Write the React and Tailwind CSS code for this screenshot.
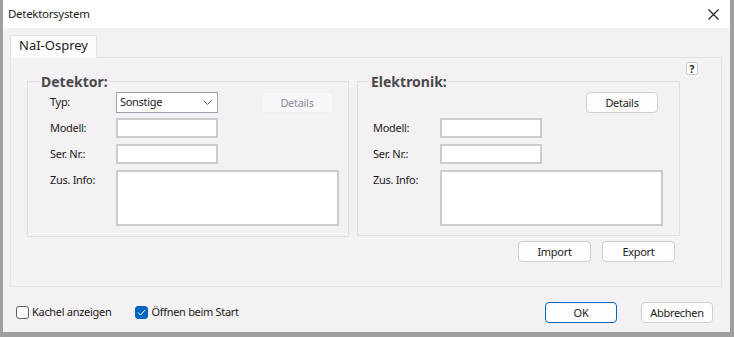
import React from 'react';
import { useState } from 'react';

const font = "font-['Segoe_UI','Noto_Sans','Open_Sans',sans-serif]";
const txt = 'text-[11px] tracking-[-0.3px] text-[#1b1b1b]';

function Btn({ children, disabled, primary, className = '' }) {
  return (
    <button
      type="button"
      className={
        'h-[21px] w-[72px] rounded-[4px] border text-[11px] tracking-[-0.3px] leading-none ' +
        (disabled
          ? 'border-[#f0ecf0] bg-[#faf7fa] text-[#8d8d9c] '
          : primary
            ? 'border-[#0067c0] bg-[#fdfdfd] text-[#1b1b1b] '
            : 'border-[#d0d0d0] bg-[#fdfdfd] text-[#1b1b1b] ') +
        className
      }
    >
      {children}
    </button>
  );
}

function Field({ label, labelW, inputW, tall }) {
  return (
    <div className="flex items-start">
      <label className={`${labelW} pt-[2px] leading-[16px] ${txt}`}>{label}</label>
      <div
        className={`${inputW} ${tall ? 'h-[56px]' : 'h-[20px]'} border-2 border-[#cccccc] bg-white`}
      />
    </div>
  );
}

function Group({ title, children, className = '' }) {
  return (
    <div className={`relative border border-[#dbe1e8] ${className}`}>
      <span className="absolute left-[12px] top-[-7px] bg-[#f4f1f4] px-[1px] text-[14px] font-bold leading-[14px] text-[#4a4a4a]">
        {title}
      </span>
      {children}
    </div>
  );
}

export default function App() {
  const [kachel, setKachel] = useState(false);
  const [start, setStart] = useState(true);

  return (
    <div className={`${font} h-[337px] w-[734px] bg-[#9f9f9f] pr-[4px] pb-[5px] pl-[3px]`}>
      <div className="flex h-full flex-col bg-[#f4f1f4]">
        {/* title bar */}
        <div className="flex h-[28px] items-center justify-between bg-white pl-[5px] pr-[10px]">
          <span className="text-[11.5px] tracking-[-0.3px] text-[#1b1b1b]">Detektorsystem</span>
          <svg width="11" height="11" viewBox="0 0 11 11" className="mr-[1px]">
            <path d="M0.5 0.5 L10.5 10.5 M10.5 0.5 L0.5 10.5" stroke="#1b1b1b" strokeWidth="1.1" />
          </svg>
        </div>

        {/* tab header */}
        <div className="flex pl-[7px] pt-[7px]">
          <div className="relative z-10 mb-[-1px] flex h-[23px] w-[87px] items-center justify-center border border-b-0 border-[#e3e3e3] bg-[#fdfcfd] pb-[2px] text-[13px] text-[#1b1b1b]">
            NaI-Osprey
          </div>
        </div>

        {/* tab panel */}
        <div className="relative ml-[7px] flex h-[230px] w-[712px] flex-col border border-[#e3e3e3] bg-[#f4f1f4] pl-[16px] pt-[23px]">
          <div className="absolute right-[23px] top-[4px] flex h-[13px] w-[12px] items-center justify-center rounded-[2px] border border-[#c8c8c8] bg-white text-[10px] font-bold leading-none text-[#1b1b1b]">
            ?
          </div>

          <div className="flex gap-[8px]">
            <Group title="Detektor:" className="h-[156px] w-[322px]">
              <div className="flex flex-col gap-[5px] pl-[22px] pt-[10px]">
                <div className="flex items-center">
                  <label className={`w-[66px] ${txt}`}>Typ:</label>
                  <div className={`flex h-[21px] w-[102px] items-center justify-between border border-[#a0a0a8] bg-white pl-[3px] pr-[5px] ${txt}`}>
                    Sonstige
                    <svg width="9" height="6" viewBox="0 0 9 6">
                      <path d="M0.5 0.5 L4.5 4.5 L8.5 0.5" fill="none" stroke="#606060" strokeWidth="1" />
                    </svg>
                  </div>
                  <Btn disabled className="ml-[43px]">Details</Btn>
                </div>
                <Field label="Modell:" labelW="w-[66px]" inputW="w-[102px]" />
                <div className="mt-[1px]">
                  <Field label="Ser. Nr.:" labelW="w-[66px]" inputW="w-[102px]" />
                </div>
                <div className="mt-[1px]">
                  <Field label="Zus. Info:" labelW="w-[66px]" inputW="w-[223px]" tall />
                </div>
              </div>
            </Group>

            <div className="flex flex-col">
              <Group title="Elektronik:" className="h-[155px] w-[323px]">
                <div className="flex flex-col pl-[15px] pt-[10px]">
                  <div className="flex justify-end pr-[21px]">
                    <Btn>Details</Btn>
                  </div>
                  <div className="mt-[5px] flex flex-col gap-[6px]">
                    <Field label="Modell:" labelW="w-[67px]" inputW="w-[102px]" />
                    <Field label="Ser. Nr.:" labelW="w-[67px]" inputW="w-[102px]" />
                    <Field label="Zus. Info:" labelW="w-[67px]" inputW="w-[223px]" tall />
                  </div>
                </div>
              </Group>
              <div className="mt-[5px] flex gap-[11px] pl-[161px]">
                <Btn className="w-[73px]">Import</Btn>
                <Btn className="w-[73px]">Export</Btn>
              </div>
            </div>
          </div>
        </div>

        {/* bottom row */}
        <div className="mt-[15px] flex items-center pl-[13px]">
          <label className={`flex items-center ${txt}`} onClick={() => setKachel(!kachel)}>
            <span
              className={`mr-[3px] flex h-[13px] w-[13px] items-center justify-center rounded-[3px] border ${
                kachel ? 'border-[#0067c0] bg-[#0067c0]' : 'border-[#5f5f5f] bg-white'
              }`}
            />
            Kachel anzeigen
          </label>
          <label className={`ml-[24px] flex items-center ${txt}`} onClick={() => setStart(!start)}>
            <span
              className={`mr-[3px] flex h-[13px] w-[13px] items-center justify-center rounded-[3px] border ${
                start ? 'border-[#0067c0] bg-[#0067c0]' : 'border-[#5f5f5f] bg-white'
              }`}
            >
              {start && (
                <svg width="9" height="7" viewBox="0 0 9 7">
                  <path d="M1 3.5 L3.5 6 L8 1" fill="none" stroke="white" strokeWidth="1" />
                </svg>
              )}
            </span>
            Öffnen beim Start
          </label>
          <div className="ml-auto flex gap-[24px] pr-[17px]">
            <Btn primary>OK</Btn>
            <Btn>Abbrechen</Btn>
          </div>
        </div>
      </div>
    </div>
  );
}
